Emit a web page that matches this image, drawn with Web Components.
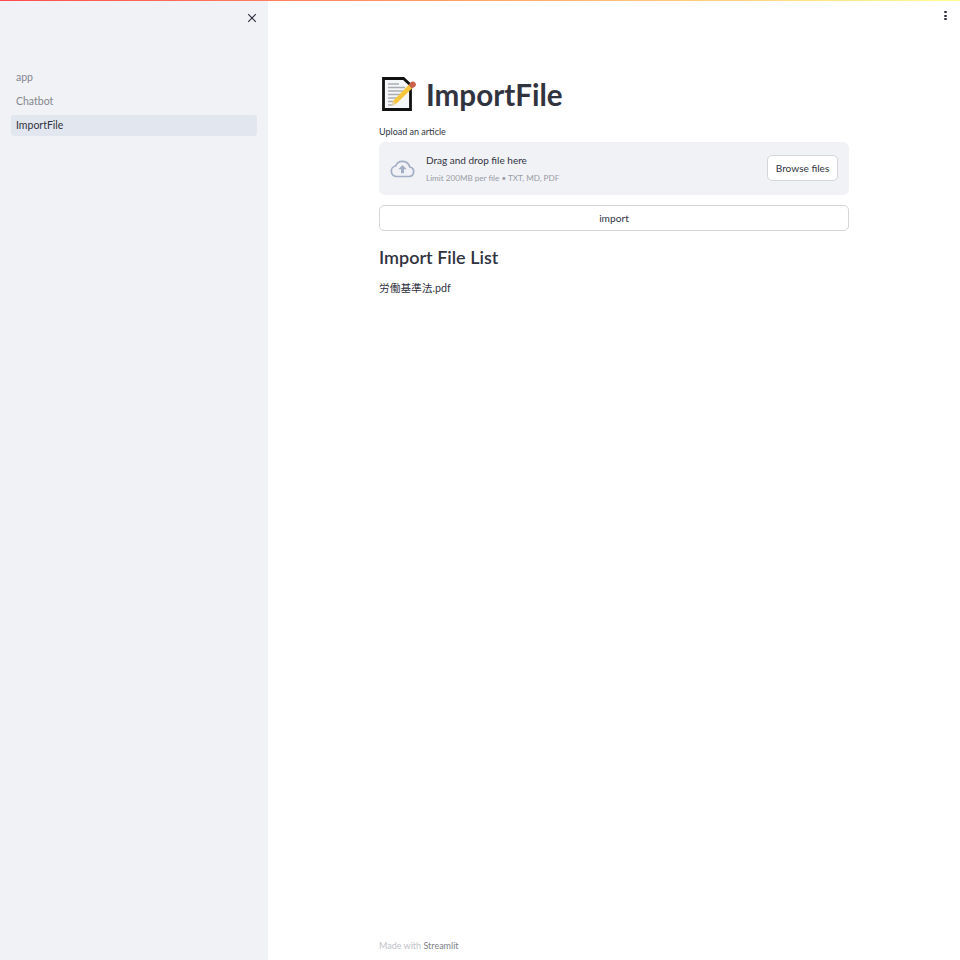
<!DOCTYPE html>
<html>
<head>
<meta charset="utf-8">
<title>ImportFile</title>
<style>
    html, body { margin: 0; height: 100%; background: #fff; }
    body { font-family: Lato, "Noto Sans CJK JP", sans-serif; color: #31333f; }
</style>
</head>
<body>
<app-shell>
    <side-nav slot="side">
        <nav-link>app</nav-link>
        <nav-link>Chatbot</nav-link>
        <nav-link active>ImportFile</nav-link>
    </side-nav>
    <page-title>ImportFile</page-title>
    <file-drop label="Upload an article"></file-drop>
    <wide-button>import</wide-button>
    <file-list heading="Import File List">
        <div>労働基準法.pdf</div>
    </file-list>
</app-shell>

<script>
class AppShell extends HTMLElement {
    constructor() {
        super();
        this.attachShadow({ mode: 'open' });
        this.shadowRoot.innerHTML = `
            <style>
                :host { display: grid; grid-template-columns: 268px 1fr; height: 960px; overflow: hidden; position: relative; }
                .bar { position: absolute; top: 0; left: 0; right: 0; height: 1px; background: linear-gradient(90deg, #ff4b4b, #ffff8c); }
                .menu { position: absolute; top: 11px; right: 13px; display: flex; flex-direction: column; gap: 1.500px; }
                .menu i { width: 3px; height: 2px; background: #31333f; border-radius: 1px; display: block; }
                main { display: flex; flex-direction: column; padding: 0 111px 0 111px; min-width: 0; }
                .body { display: flex; flex-direction: column; padding-top: 71px; flex: 1; }
                footer { height: 20px; font-size: 9px; color: #c0c2c7; }
                footer span { color: #7d7f87; }
            </style>
            <slot name="side"></slot>
            <main>
                <div class="body"><slot></slot></div>
                <footer>Made with <span>Streamlit</span></footer>
            </main>
            <div class="bar"></div>
            <div class="menu"><i></i><i></i><i></i></div>
        `;
    }
}

class SideNav extends HTMLElement {
    constructor() {
        super();
        this.attachShadow({ mode: 'open' });
        this.shadowRoot.innerHTML = `
            <style>
                :host { display: flex; flex-direction: column; background: #f0f2f6; padding: 12px 10px 0 11px; box-sizing: border-box; }
                .close { align-self: flex-end; height: 12px; margin: 0 0 43px; display: flex; }
                ul { display: flex; flex-direction: column; gap: 3px; margin: 0 1px 0 0; padding: 0; }
            </style>
            <div class="close">
                <svg width="12" height="12" viewBox="0 0 12 12"><path d="M2.200 2.200l7.600 7.600M9.800 2.200l-7.600 7.600" stroke="#31333f" stroke-width="1.200" fill="none"/></svg>
            </div>
            <ul><slot></slot></ul>
        `;
    }
}

class NavLink extends HTMLElement {
    constructor() {
        super();
        this.attachShadow({ mode: 'open' });
        this.shadowRoot.innerHTML = `
            <style>
                :host { display: flex; align-items: center; height: 21px; padding: 0 5px 1px; box-sizing: border-box; border-radius: 3px; font-size: 10.500px; color: #84868f; }
                :host([active]) { background: #e2e7ef; color: #31333f; }
            </style>
            <slot></slot>
        `;
    }
}

class PageTitle extends HTMLElement {
    constructor() {
        super();
        this.attachShadow({ mode: 'open' });
        this.shadowRoot.innerHTML = `
            <style>
                :host { display: flex; align-items: center; height: 46px; padding-left: 3px; font-size: 29.600px; font-weight: 700; color: #31333f; }
                svg { margin-right: 9px; flex: none; }
            </style>
            <svg width="35" height="34" viewBox="0 0 35 34">
                <path d="M1.500 1.500h20l7 6.500v24.500h-27z" fill="#f4f6f7" stroke="#111" stroke-width="2.800"/>
                <path d="M6 7h11M6 10.500h17M6 14h17M6 17.500h14M6 21h10M6 24.500h7M6 28h5" stroke="#a9adb2" stroke-width="1.300"/>
                <path d="M9.500 28.500l1.500-4.500L27.500 7l3.500 3.500L14 27z" fill="#f8c63d"/>
                <path d="M9.500 28.500l1.500-4.500 3 3z" fill="#e8d5b0"/>
                <path d="M26.500 8l2.500-3c1.500-1 3.500-.500 4.500 1 .700 1.200.500 2.300-.300 3.500L30 11.500z" fill="#c9604c"/>
            </svg>
            <span><slot></slot></span>
        `;
    }
}

class FileDrop extends HTMLElement {
    constructor() {
        super();
        this.attachShadow({ mode: 'open' });
        this.shadowRoot.innerHTML = `
            <style>
                :host { display: block; margin-top: 9px; }
                label { display: block; font-size: 9px; line-height: 12px; margin-bottom: 4px; color: #31333f; }
                .zone { display: flex; align-items: center; height: 53px; background: #f0f2f6; border-radius: 6px; padding: 0 11px; box-sizing: border-box; }
                svg { margin-right: 11px; flex: none; }
                .text { flex: 1; display: flex; flex-direction: column; gap: 6px; }
                .main { font-size: 10px; line-height: 13px; }
                .sub { font-size: 8.150px; line-height: 11px; color: #9a9ca4; }
                button { font: inherit; font-size: 10.100px; width: 71px; height: 26px; margin-bottom: 1px; padding: 0; background: #fff; color: #31333f; border: 1px solid #d5d6da; border-radius: 5px; }
            </style>
            <label>${this.getAttribute('label') || ''}</label>
            <div class="zone">
                <svg width="25" height="18" viewBox="0 0 25 18">
                    <path d="M6.500 16.500h12.500a4.800 4.800 0 0 0 .8-9.500 7.500 7.500 0 0 0-14.200-1A5.300 5.300 0 0 0 6.500 16.500z" fill="none" stroke="#a3afc4" stroke-width="1.700"/>
                    <path d="M12.500 5l-4.200 4.300h2.700v4h3v-4h2.700z" fill="#a3afc4"/>
                </svg>
                <div class="text">
                    <span class="main">Drag and drop file here</span>
                    <span class="sub">Limit 200MB per file • TXT, MD, PDF</span>
                </div>
                <button>Browse files</button>
            </div>
        `;
    }
}

class WideButton extends HTMLElement {
    constructor() {
        super();
        this.attachShadow({ mode: 'open' });
        this.shadowRoot.innerHTML = `
            <style>
                :host { display: flex; align-items: center; justify-content: center; height: 26px; margin-top: 10px; padding-bottom: 1px; box-sizing: border-box; border: 1px solid #d5d6da; border-radius: 5px; font-size: 10.200px; color: #31333f; background: #fff; }
            </style>
            <slot></slot>
        `;
    }
}

class FileList extends HTMLElement {
    constructor() {
        super();
        this.attachShadow({ mode: 'open' });
        this.shadowRoot.innerHTML = `
            <style>
                :host { display: block; margin-top: 14px; font-size: 10.700px; line-height: 15px; color: #31333f; }
                h2 { margin: 0 0 11px; font-size: 18px; line-height: 24px; font-weight: 600; }
            </style>
            <h2>${this.getAttribute('heading') || ''}</h2>
            <slot></slot>
        `;
    }
}

customElements.define('app-shell', AppShell);
customElements.define('side-nav', SideNav);
customElements.define('nav-link', NavLink);
customElements.define('page-title', PageTitle);
customElements.define('file-drop', FileDrop);
customElements.define('wide-button', WideButton);
customElements.define('file-list', FileList);
</script>
</body>
</html>
